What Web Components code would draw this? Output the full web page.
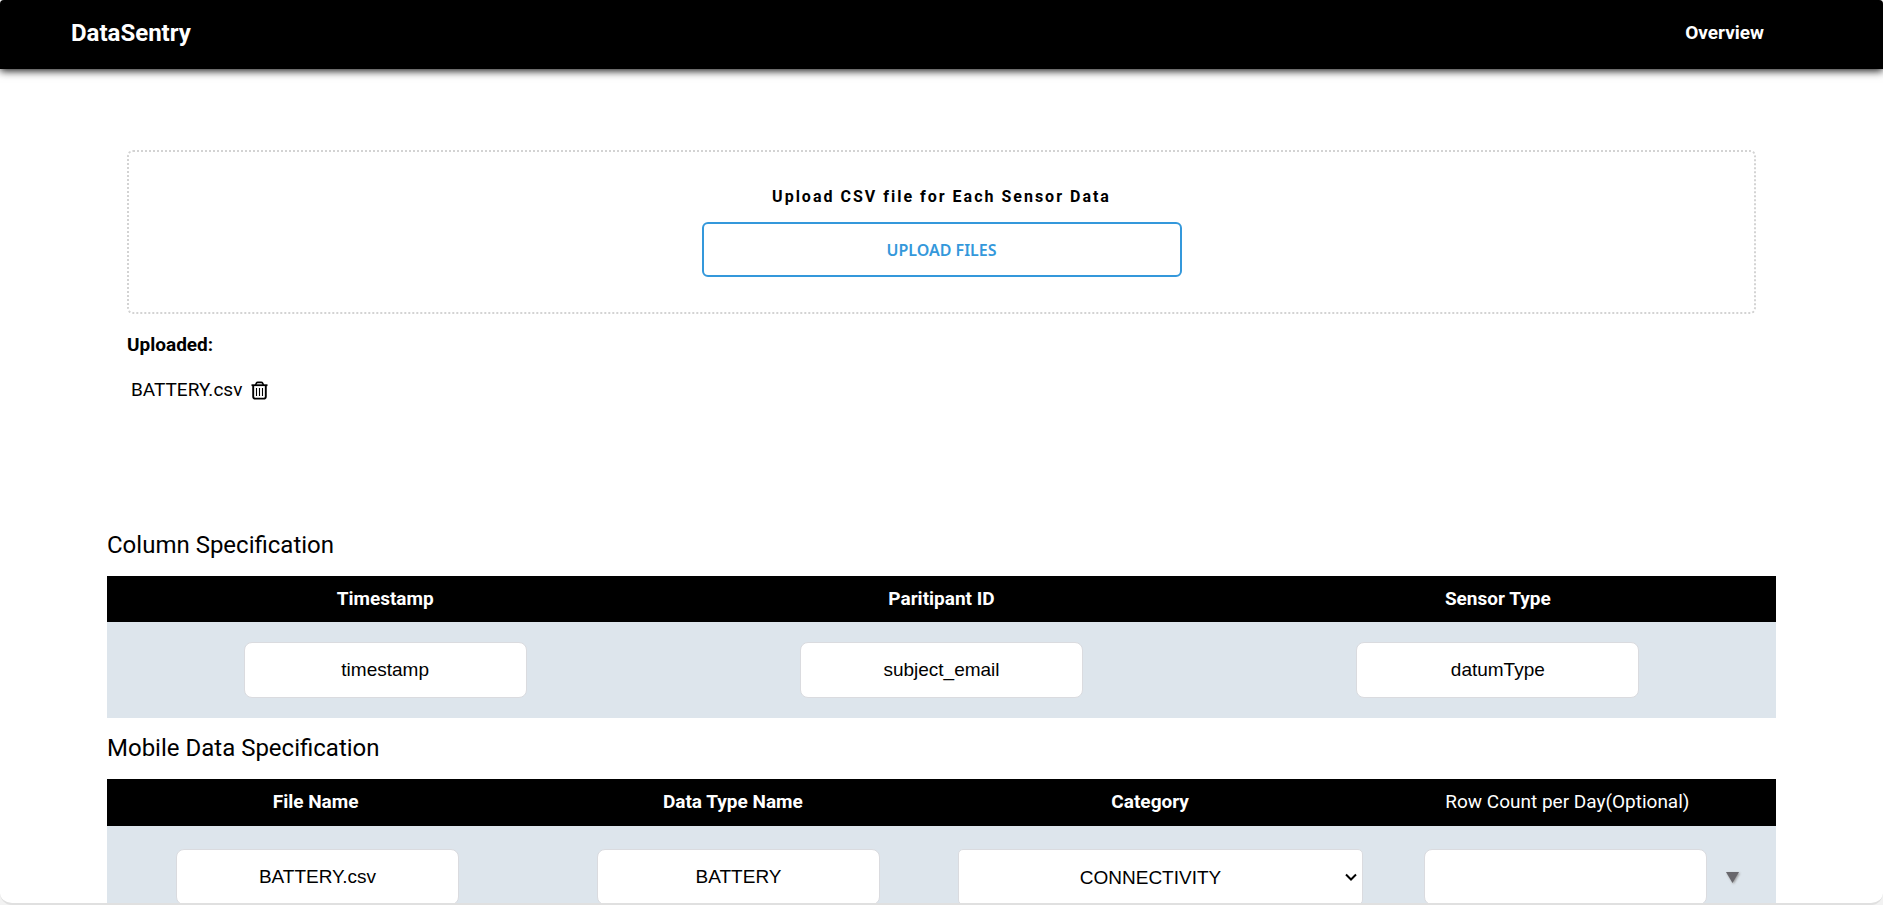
<!DOCTYPE html>
<html lang="en">
<head>
<meta charset="utf-8">
<title>DataSentry</title>
<style>
html { background: #f2f2f2; }
body { margin: 0; font-family: Roboto, sans-serif; color: #000; }
</style>
</head>
<body>
<data-sentry-app></data-sentry-app>
<script>
const define = (name, html, setup) => {
  const template = document.createElement('template');
  template.innerHTML = html;
  customElements.define(name, class extends HTMLElement {
    constructor() {
      super();
      this.attachShadow({ mode: 'open' }).append(template.content.cloneNode(true));
    }
    connectedCallback() { if (setup) setup(this, this.shadowRoot); }
  });
};

define('site-header', `
<style>
:host { display: block; position: relative; background: #000; color: #fff; box-shadow: 0 2px 8px rgba(0,0,0,.9); }
header { display: flex; justify-content: space-between; align-items: center; height: 69px; padding: 0 119px 3px 71px; box-sizing: border-box; }
a { color: inherit; text-decoration: none; font-weight: 700; font-size: 19px; line-height: 28px; }
.brand { font-size: 24px; }
</style>
<header><a class="brand" href="#">DataSentry</a><nav><a href="#overview">Overview</a></nav></header>`);

define('upload-zone', `
<style>
:host { display: block; border: 2px dotted #d3d3d3; border-radius: 6px; padding: 33px 16px 35px; }
div { display: flex; flex-direction: column; align-items: center; gap: 13px; }
h2 { margin: 0; font-size: 16px; line-height: 24px; font-weight: 700; letter-spacing: 2px; }
button { width: 480px; max-width: 100%; height: 55px; border: 2px solid #3498db; border-radius: 6px; background: #fff; color: #3498db; font: 600 16px "Noto Sans", sans-serif; text-transform: uppercase; cursor: pointer; }
</style>
<div><h2><slot></slot></h2><button type="button">Upload files</button></div>`);

define('uploaded-file', `
<style>
:host { display: flex; align-items: center; gap: 8px; font-size: 19px; line-height: 24px; padding-left: 4px; }
button { display: flex; border: 0; background: none; padding: 0; color: #000; cursor: pointer; }
svg { width: 19px; height: 19px; }
</style>
<span><slot></slot></span>
<button type="button" aria-label="Delete file"><svg viewBox="0 0 19 19" fill="none" stroke="currentColor">
<path d="M1.5 4.2H17.5" stroke-width="1.8"/><path d="M5.5 4L6.4 2.2Q6.8 1.4 7.8 1.4H11.2Q12.2 1.4 12.6 2.2L13.5 4" stroke-width="1.6"/>
<path d="M3.2 5V15.4Q3.2 17.6 5.4 17.6H13.6Q15.8 17.6 15.8 15.4V5" stroke-width="1.9"/><path d="M6.5 7V15M9.5 7V15M12.5 7V15" stroke-width="1.1"/></svg></button>`);

define('text-field', `
<style>
:host { display: block; width: 283px; max-width: 90%; }
input { display: block; box-sizing: border-box; width: 100%; height: 56px; border: 1px solid #dadbdf; border-radius: 8px; background: #fff; color: #000; text-align: center; font: 19px "Liberation Sans", Arial, sans-serif; padding: 0 12px; }
</style>
<input type="text">`, (host, root) => {
  const input = root.querySelector('input');
  input.value = host.getAttribute('value') || '';
  input.setAttribute('aria-label', host.getAttribute('label'));
});

define('select-field', `
<style>
:host { display: grid; align-items: center; width: calc(100% - 18px); }
select, svg { grid-area: 1 / 1; }
select { appearance: none; box-sizing: border-box; width: 100%; height: 56px; border: 1px solid #dadbdf; border-radius: 5px; background: #fff; color: #000; text-align: center; text-align-last: center; font: 19px "Liberation Sans", Arial, sans-serif; padding: 0 20px 0 0; }
svg { justify-self: end; width: 12px; height: 8px; margin-right: 6px; pointer-events: none; z-index: 1; }
</style>
<select aria-label="Category"><option>CONNECTIVITY</option></select>
<svg viewBox="0 0 12 8" fill="none" stroke="#000" stroke-width="2"><path d="M1 1.5L6 6.5L11 1.5"/></svg>`);

const tableStyle = `
table, thead, tbody { display: block; }
tr { display: grid; grid-template-columns: repeat(var(--columns), 1fr); }
thead { background: #000; color: #fff; }
th { padding: 11px 0; font-size: 19px; line-height: 24px; font-weight: 700; }
tbody tr { background: #dde5ec; align-items: center; }
td { display: flex; justify-content: center; align-items: center; padding: 20px 0; }`;

define('column-table', `
<style>:host { display: block; --columns: 3; } ${tableStyle}</style>
<table aria-label="Column Specification">
<thead><tr><th scope="col">Timestamp</th><th scope="col">Paritipant ID</th><th scope="col">Sensor Type</th></tr></thead>
<tbody><tr><td><text-field label="Timestamp" value="timestamp"></text-field></td><td><text-field label="Paritipant ID" value="subject_email"></text-field></td><td><text-field label="Sensor Type" value="datumType"></text-field></td></tr></tbody>
</table>`);

define('mobile-table', `
<style>:host { display: block; --columns: 4; } ${tableStyle}
th:last-child { font-weight: 400; }
th { padding-bottom: 12px; }
td { padding: 23px 0; }
tbody tr { grid-template-columns: 421fr 421fr 423fr 404fr; }
td:last-child { justify-content: flex-end; gap: 18px; padding-right: 36px; }
.more { border: 0; padding: 0; background: none; display: flex; cursor: pointer; }
svg { width: 15px; height: 15px; filter: drop-shadow(1px 1px 1px #999); }
</style>
<table aria-label="Mobile Data Specification">
<thead><tr><th scope="col">File Name</th><th scope="col">Data Type Name</th><th scope="col">Category</th><th scope="col">Row Count per Day(Optional)</th></tr></thead>
<tbody><tr><td><text-field label="File Name" value="BATTERY.csv"></text-field></td><td><text-field label="Data Type Name" value="BATTERY"></text-field></td>
<td><select-field></select-field></td>
<td><text-field label="Row Count per Day"></text-field><button class="more" type="button" aria-label="Show details"><svg viewBox="0 0 15 15"><path d="M1 2H14L7.5 13Z" fill="#68676c"/></svg></button></td></tr></tbody>
</table>`);

define('data-sentry-app', `
<style>
:host { display: block; box-sizing: border-box; height: 100vh; overflow: hidden; background: #fff; border-bottom: 2px solid #e0e0e0; border-radius: 4px 4px 12px 12px; }
main { padding: 81px 107px 0; }
.upload { padding: 0 20px; min-height: 365px; }
h3 { margin: 19px 0 21px; font-size: 19px; line-height: 24px; font-weight: 700; }
h2 { margin: 0; padding: 14px 0 15px; font-size: 24px; line-height: 32px; font-weight: 400; }
</style>
<site-header></site-header>
<main>
<section class="upload"><upload-zone>Upload CSV file for Each Sensor Data</upload-zone>
<h3>Uploaded:</h3><uploaded-file>BATTERY.csv</uploaded-file></section>
<section><h2>Column Specification</h2><column-table></column-table></section>
<section><h2>Mobile Data Specification</h2><mobile-table></mobile-table></section>
</main>`);
</script>
</body>
</html>
